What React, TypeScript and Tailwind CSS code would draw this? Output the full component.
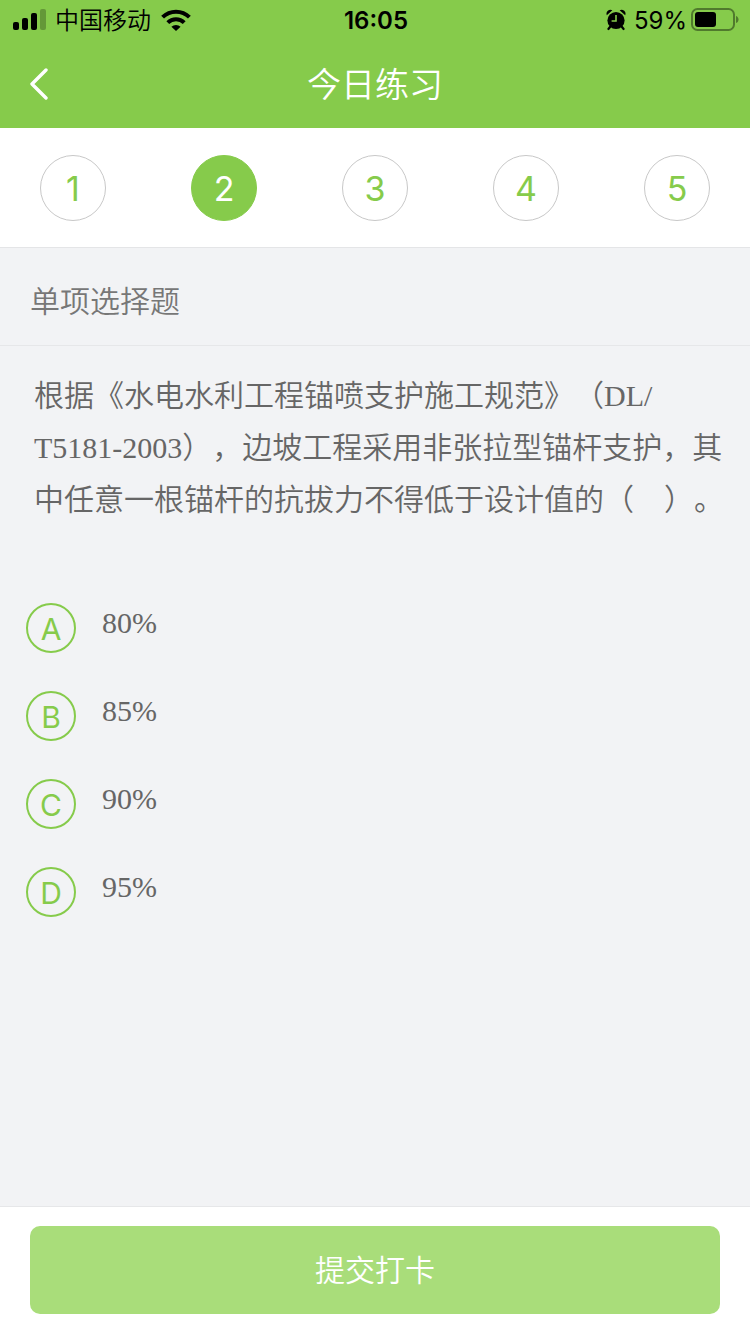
import React, { useState } from "react";

type Option = {
  key: string;
  text: string;
};

const STEPS = [1, 2, 3, 4, 5];

const OPTIONS: Option[] = [
  { key: "A", text: "80%" },
  { key: "B", text: "85%" },
  { key: "C", text: "90%" },
  { key: "D", text: "95%" },
];

function SignalIcon() {
  return (
    <svg width="34" height="22" viewBox="0 0 34 22" aria-hidden="true">
      <rect x="0" y="13" width="6" height="8" rx="2" />
      <rect x="9" y="9" width="6" height="12" rx="2" />
      <rect x="18" y="4" width="6" height="17" rx="2" />
      <rect x="27" y="0" width="6" height="21" rx="2" opacity="0.25" />
    </svg>
  );
}

function WifiIcon() {
  return (
    <svg width="30" height="22" viewBox="0 0 30 22" fill="none" stroke="#000" strokeWidth="4" aria-hidden="true">
      <path d="M1.6 8.2 A19 19 0 0 1 28.4 8.2" />
      <path d="M6.8 13.6 A11.6 11.6 0 0 1 23.2 13.6" />
      <path d="M10.4 17.8 A6.5 6.5 0 0 1 19.6 17.8 L15 22 Z" fill="#000" stroke="none" />
    </svg>
  );
}

function AlarmIcon() {
  return (
    <svg width="20" height="22" viewBox="0 0 20 22" aria-hidden="true">
      <circle cx="10" cy="11.5" r="8.6" />
      <path d="M0.8 6.2 A4 4 0 0 1 6.4 1.2 Z" />
      <path d="M19.2 6.2 A4 4 0 0 0 13.6 1.2 Z" />
      <path d="M4.4 17.5 L2.4 20 M15.6 17.5 L17.6 20" stroke="#000" strokeWidth="2.2" strokeLinecap="round" />
      <path d="M10 6 V12 H5.6" fill="none" stroke="#86cb4b" strokeWidth="1.6" />
    </svg>
  );
}

function BatteryIcon() {
  return (
    <svg width="48" height="24" viewBox="0 0 48 24" aria-hidden="true">
      <rect x="1" y="1" width="42" height="21" rx="5.5" fill="none" stroke="#000" strokeOpacity="0.4" strokeWidth="2" />
      <rect x="4" y="4" width="21" height="15" rx="3" />
      <path d="M45 8 C48.4 9 48.4 14 45 15 Z" opacity="0.4" />
    </svg>
  );
}

function StatusBar() {
  return (
    <div className="grid h-10 grid-cols-3 items-center pl-[13px] pr-[11px] text-2xl text-black">
      <div className="flex items-center">
        <SignalIcon />
        <span className="ml-2 pt-0.5 font-[350]">中国移动</span>
        <span className="ml-[10px]">
          <WifiIcon />
        </span>
      </div>
      <div className="pt-0.5 text-center font-semibold">16:05</div>
      <div className="flex items-center justify-end gap-1">
        <AlarmIcon />
        <span className="ml-1 pt-0.5">59%</span>
        <BatteryIcon />
      </div>
    </div>
  );
}

export default function App() {
  const [step, setStep] = useState(2);
  const [answer, setAnswer] = useState("");

  return (
    <div className="flex min-h-screen flex-col bg-[#f2f3f5] font-['Inter','Noto_Sans_CJK_SC',sans-serif]">
      <header className="bg-[#86cb4b]">
        <StatusBar />
        <div className="grid h-22 grid-cols-[80px_1fr_80px] items-center text-white">
          <button type="button" aria-label="返回" className="flex h-full items-center pl-[29px]">
            <svg width="20" height="32" viewBox="0 0 20 32" fill="none" stroke="currentColor" strokeWidth="3.4" strokeLinecap="round" strokeLinejoin="round">
              <path d="M17 2 L3 16 L17 30" />
            </svg>
          </button>
          <h1 className="text-center text-[34px] font-[350]">今日练习</h1>
        </div>
      </header>

      {/* Question numbers */}
      <nav className="flex justify-between border-b border-[#e4e5e7] bg-white px-10 pt-[27px] pb-[26px]">
        {STEPS.map((n) => (
          <button
            key={n}
            type="button"
            onClick={() => setStep(n)}
            className={`size-[66px] rounded-full border text-[34px] ${
              n === step
                ? "border-[#86cb4b] bg-[#86cb4b] text-white"
                : "border-[#c8c8c8] bg-white text-[#86cb4b]"
            }`}
          >
            {n}
          </button>
        ))}
      </nav>

      <h2 className="border-b border-[#e6e7e9] px-[30px] pt-[31px] pb-[21px] text-[30px] leading-[45px] font-[350] text-[#777]">
        单项选择题
      </h2>

      <main className="flex-1 font-['Liberation_Serif','Noto_Sans_CJK_SC',serif] text-[30px] text-[#666]">
        <p className="pt-6 pr-5 pl-[34px] leading-[52px] font-[350] [text-spacing-trim:space-all]">
          根据《水电水利工程锚喷支护施工规范》（DL/
          <wbr />
          T5181-2003），边坡工程采用非张拉型锚杆支护，其中任意一根锚杆的抗拔力不得低于设计值的（　）。
        </p>

        <div role="radiogroup" aria-label="选项" className="flex flex-col gap-[38px] px-[26px] pt-[77px] pb-10">
          {OPTIONS.map((option) => (
            <label key={option.key} className="flex cursor-pointer items-start gap-[26px]">
              <input
                type="radio"
                name="answer"
                value={option.key}
                checked={answer === option.key}
                onChange={() => setAnswer(option.key)}
                className="peer sr-only"
              />
              <span className="flex size-[50px] shrink-0 items-center justify-center rounded-full border-2 border-[#86cb4b] pt-0.5 font-['Inter',sans-serif] text-[#86cb4b] peer-checked:bg-[#86cb4b] peer-checked:text-white">
                {option.key}
              </span>
              <span className="leading-10">{option.text}</span>
            </label>
          ))}
        </div>
      </main>

      <footer className="border-t border-[#e6e7e9] bg-white px-[30px] pt-[19px] pb-5">
        <button type="button" className="h-22 w-full rounded-[10px] bg-[#a9dd7a] text-[30px] font-[350] text-white">
          提交打卡
        </button>
      </footer>
    </div>
  );
}
